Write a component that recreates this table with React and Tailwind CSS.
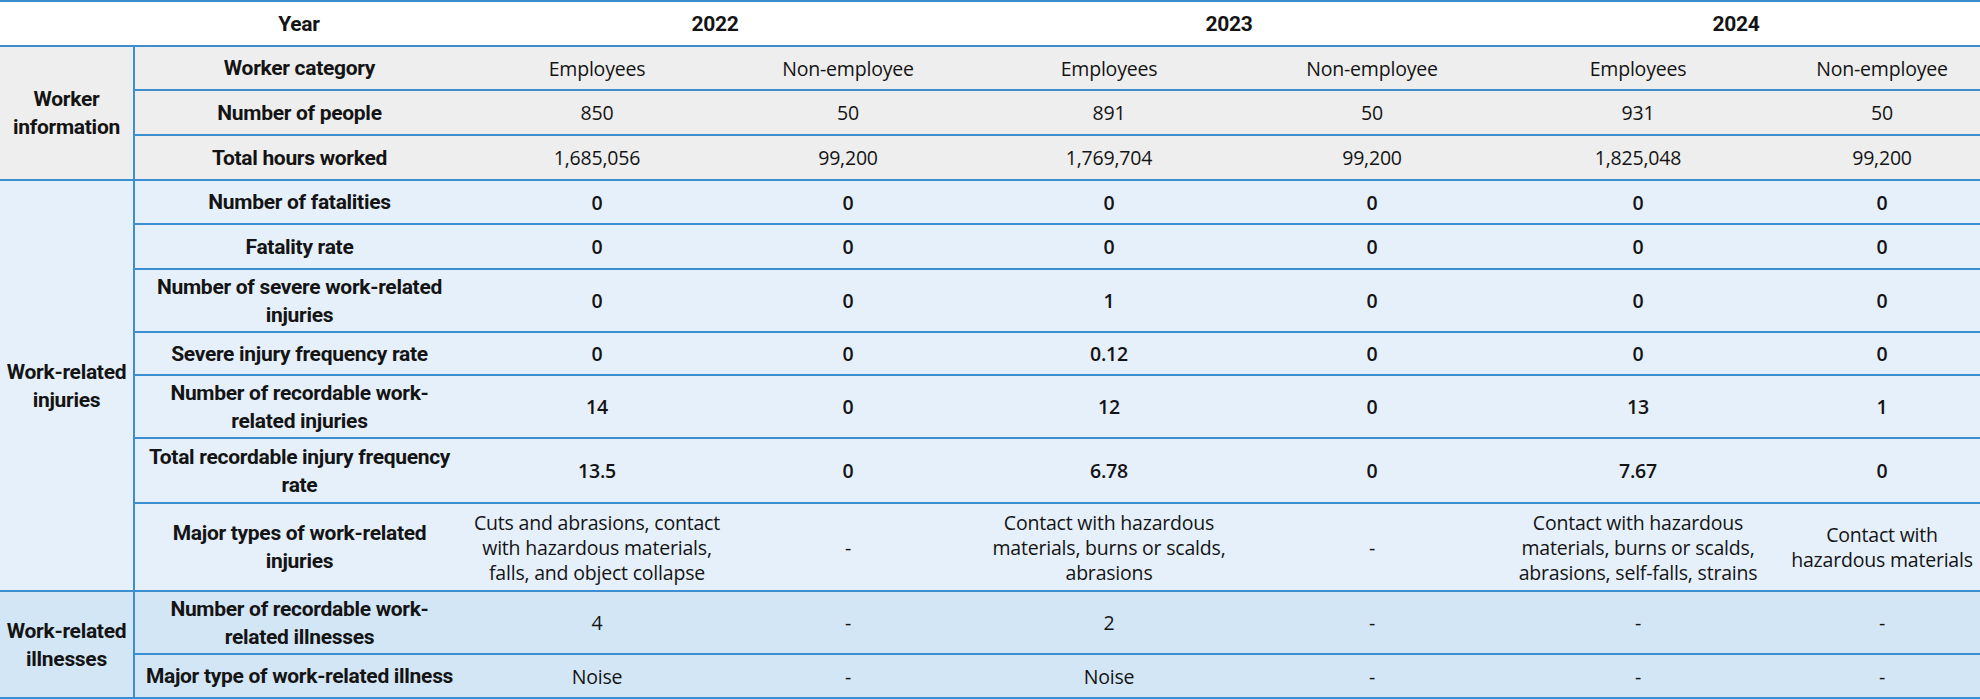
import React from 'react'

const label = "font-['Roboto',sans-serif] font-bold text-[21px] leading-[28px] text-[#141414] tracking-[-0.3px]"
const val = "font-['Open_Sans',sans-serif] text-[19.5px] leading-[25px] text-[#141414] tracking-[-0.2px]"
const line = "border-b-2 border-[#3b8fd0]"

const workerRows = [
  { name: 'Worker category', h: 'h-[44px]', v: ['Employees', 'Non-employee', 'Employees', 'Non-employee', 'Employees', 'Non-employee'] },
  { name: 'Number of people', h: 'h-[45px]', v: ['850', '50', '891', '50', '931', '50'] },
  { name: 'Total hours worked', h: 'h-[45px]', v: ['1,685,056', '99,200', '1,769,704', '99,200', '1,825,048', '99,200'] },
]

const injuryRows = [
  { name: ['Number of fatalities'], h: 'h-[44px]', bold: true, v: ['0', '0', '0', '0', '0', '0'] },
  { name: ['Fatality rate'], h: 'h-[45px]', bold: true, v: ['0', '0', '0', '0', '0', '0'] },
  { name: ['Number of severe work-related', 'injuries'], h: 'h-[63px]', bold: true, v: ['0', '0', '1', '0', '0', '0'] },
  { name: ['Severe injury frequency rate'], h: 'h-[43px]', bold: true, v: ['0', '0', '0.12', '0', '0', '0'] },
  { name: ['Number of recordable work-', 'related injuries'], h: 'h-[63px]', bold: true, v: ['14', '0', '12', '0', '13', '1'] },
  { name: ['Total recordable injury frequency', 'rate'], h: 'h-[65px]', bold: true, v: ['13.5', '0', '6.78', '0', '7.67', '0'] },
  {
    name: ['Major types of work-related', 'injuries'], h: 'h-[88px]', bold: false,
    v: [
      ['Cuts and abrasions, contact', 'with hazardous materials,', 'falls, and object collapse'],
      ['-'],
      ['Contact with hazardous', 'materials, burns or scalds,', 'abrasions'],
      ['-'],
      ['Contact with hazardous', 'materials, burns or scalds,', 'abrasions, self-falls, strains'],
      ['Contact with', 'hazardous materials'],
    ],
  },
]

const illnessRows = [
  { name: ['Number of recordable work-', 'related illnesses'], h: 'h-[63px]', v: ['4', '-', '2', '-', '-', '-'] },
  { name: ['Major type of work-related illness'], h: 'h-[44px]', v: ['Noise', '-', 'Noise', '-', '-', '-'] },
]

const Lines = ({ parts }) => (
  <>
    {parts.map((p, i) => (
      <React.Fragment key={i}>
        {i > 0 && <br />}
        {p}
      </React.Fragment>
    ))}
  </>
)

const App = () => {
  return (
    <div className="w-[1980px] h-[699px] bg-white overflow-hidden">
      <table className="w-[1980px] table-fixed border-collapse text-center border-t-2 border-[#3b8fd0]">
        <colgroup>
          <col className="w-[134px]" />
          <col className="w-[330px]" />
          <col className="w-[266px]" />
          <col className="w-[236px]" />
          <col className="w-[286px]" />
          <col className="w-[240px]" />
          <col className="w-[292px]" />
          <col className="w-[196px]" />
        </colgroup>
        <thead>
          <tr className="h-[45px] bg-white">
            <th className={`${line} p-0`}></th>
            <th className={`${line} ${label} p-0`}>Year</th>
            <th colSpan={2} className={`${line} ${label} p-0`}>2022</th>
            <th colSpan={2} className={`${line} ${label} p-0`}>2023</th>
            <th colSpan={2} className={`${line} ${label} p-0`}>2024</th>
          </tr>
        </thead>
        <tbody>
          {workerRows.map((r, i) => (
            <tr key={r.name} className={`${r.h} bg-[#eeeeee]`}>
              {i === 0 && (
                <td rowSpan={3} className={`${line} border-r-2 ${label} p-0`}>
                  Worker<br />information
                </td>
              )}
              <td className={`${line} ${label} p-0 whitespace-nowrap`}>{r.name}</td>
              {r.v.map((v, j) => (
                <td key={j} className={`${line} ${val} p-0`}>{v}</td>
              ))}
            </tr>
          ))}

          {injuryRows.map((r, i) => (
            <tr key={r.name.join(' ')} className={`${r.h} bg-[#e6f0fb]`}>
              {i === 0 && (
                <td rowSpan={7} className={`${line} border-r-2 ${label} p-0`}>
                  Work-related<br />injuries
                </td>
              )}
              <td className={`${line} ${label} p-0 whitespace-nowrap`}>
                <Lines parts={r.name} />
              </td>
              {r.v.map((v, j) => (
                <td key={j} className={`${line} ${val} ${r.bold ? 'font-semibold' : ''} p-0 whitespace-nowrap`}>
                  {Array.isArray(v) ? <Lines parts={v} /> : v}
                </td>
              ))}
            </tr>
          ))}

          {illnessRows.map((r, i) => (
            <tr key={r.name.join(' ')} className={`${r.h} bg-[#d3e6f6]`}>
              {i === 0 && (
                <td rowSpan={2} className={`${line} border-r-2 ${label} p-0`}>
                  Work-related<br />illnesses
                </td>
              )}
              <td className={`${line} ${label} p-0 whitespace-nowrap`}>
                <Lines parts={r.name} />
              </td>
              {r.v.map((v, j) => (
                <td key={j} className={`${line} ${val} p-0`}>{v}</td>
              ))}
            </tr>
          ))}
        </tbody>
      </table>
    </div>
  )
}

export default App
